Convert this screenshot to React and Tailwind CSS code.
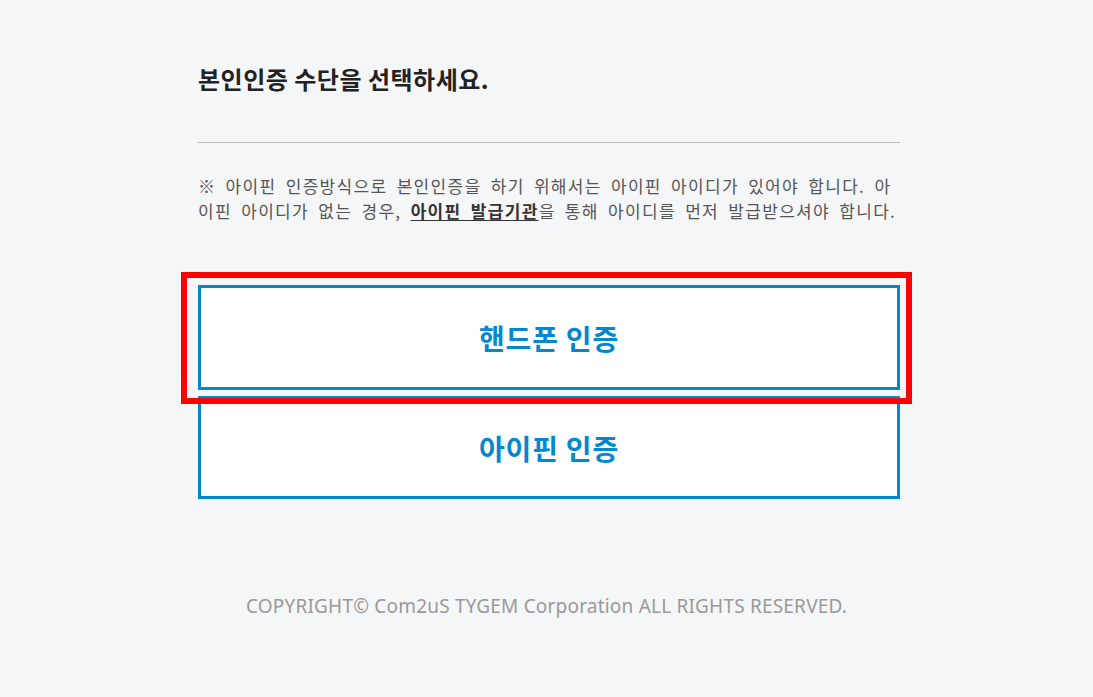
export default function App() {
  const font = { fontFamily: '"Noto Sans CJK KR", "Noto Sans", sans-serif' };
  return (
    <div className="min-h-screen w-full bg-[#f5f6f8]" style={font}>
      <div className="w-[702px] ml-[198px] pt-[63px]">
        <h2 className="text-[24px] font-bold text-[#222] leading-[32px] tracking-[0.5px]">
          본인인증 수단을 선택하세요.
        </h2>
        <div className="mt-[47px] h-px bg-[#bbbbbb]" />
        <p className="mt-[30px] text-[17px] leading-[25px] text-[#555] tracking-[1.3px] [word-spacing:4.2px] whitespace-nowrap">
          ※ 아이핀 인증방식으로 본인인증을 하기 위해서는 아이핀 아이디가 있어야 합니다. 아
          <br />
          이핀 아이디가 없는 경우,{" "}
          <a className="font-bold text-[#333] underline underline-offset-2">아이핀 발급기관</a>을 통해
          아이디를 먼저 발급받으셔야 합니다.
        </p>
        <div className="mt-[62px] flex flex-col gap-[6px]">
          <div className="relative">
            <button className="w-full h-[105px] bg-white border-[3px] border-[#0288d1] text-[#0288d1] text-[28px] font-semibold tracking-[0.8px]">
              핸드폰 인증
            </button>
            <div className="absolute left-[-17px] right-[-12px] top-[-13px] bottom-[-14px] border-[6px] border-[#ff0000] pointer-events-none" />
          </div>
          <button className="w-full h-[103px] bg-white border-[3px] border-[#0288d1] text-[#0288d1] text-[28px] font-semibold tracking-[0.8px]">
            아이핀 인증
          </button>
        </div>
      </div>
      <p className="mt-[93px] text-center text-[19px] text-[#999] tracking-[0.2px]" style={{ fontFamily: '"Noto Sans", sans-serif' }}>
        COPYRIGHT© Com2uS TYGEM Corporation ALL RIGHTS RESERVED.
      </p>
    </div>
  );
}
